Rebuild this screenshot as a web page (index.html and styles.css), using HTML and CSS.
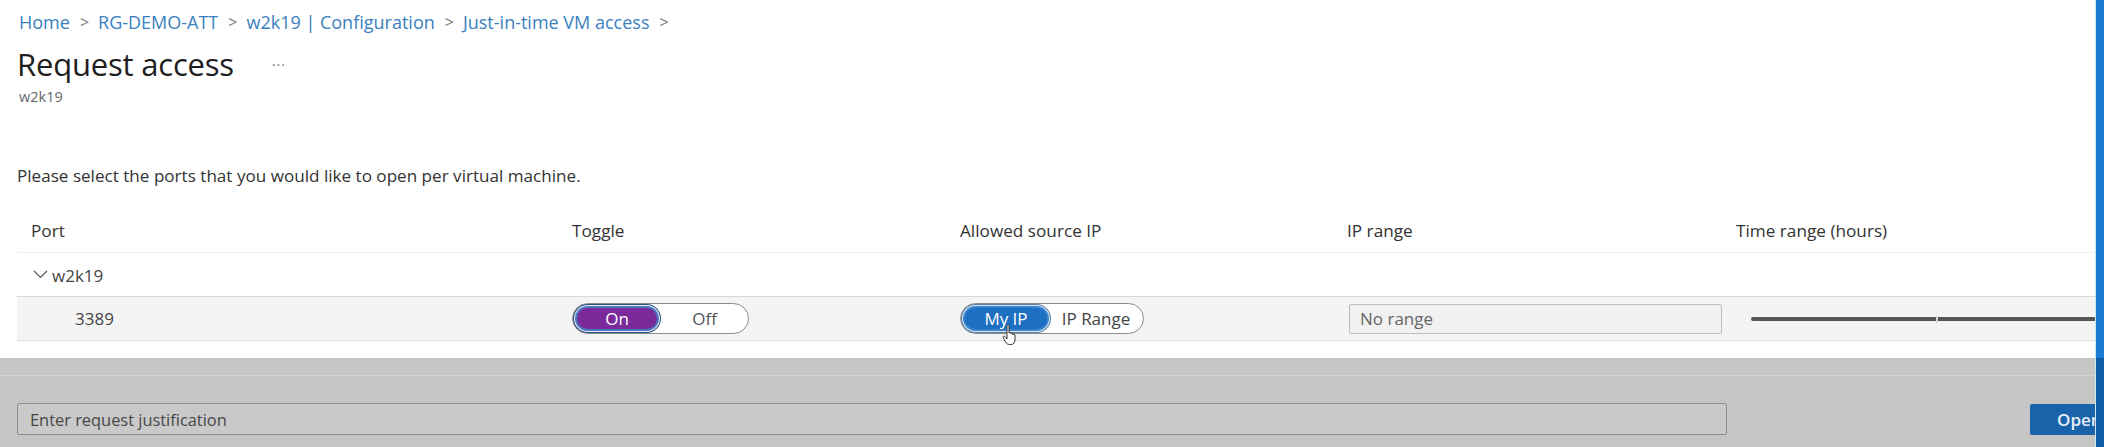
FILE: index.html
```html
<!DOCTYPE html>
<html lang="en">
<head>
<meta charset="utf-8">
<title>Request access</title>
<link rel="stylesheet" href="styles.css">
</head>
<body>
<div class="screen">
  <div class="main">
    <div class="top">
      <nav class="crumbs">
        <a>Home</a><span class="sep">&gt;</span>
        <a>RG-DEMO-ATT</a><span class="sep">&gt;</span>
        <a>w2k19 | Configuration</a><span class="sep">&gt;</span>
        <a>Just-in-time VM access</a><span class="sep">&gt;</span>
      </nav>
      <div class="title-row">
        <h1 class="title">Request access</h1>
        <span class="more">···</span>
      </div>
      <div class="subtitle">w2k19</div>
      <p class="intro">Please select the ports that you would like to open per virtual machine.</p>

      <div class="grid head">
        <div class="cell">Port</div>
        <div class="cell">Toggle</div>
        <div class="cell">Allowed source IP</div>
        <div class="cell">IP range</div>
        <div class="cell">Time range (hours)</div>
      </div>
      <div class="group">
        <svg class="chev" width="15" height="9" viewBox="0 0 15 9"><path d="M1 1 L7.5 7.5 L14 1" fill="none" stroke="#555" stroke-width="1.2"/></svg>
        <span>w2k19</span>
      </div>
      <div class="grid datarow">
        <div class="cell port">3389</div>
        <div class="cell">
          <div class="seg seg-toggle">
            <span class="opt on purple">On</span>
            <span class="opt off">Off</span>
          </div>
        </div>
        <div class="cell">
          <div class="seg seg-ip">
            <span class="opt on blue">My IP</span>
            <span class="opt off">IP Range</span>
            <svg class="cursor" width="18" height="22" viewBox="0 0 18 22"><path d="M5 1.5 C5 0.6 7 0.6 7 1.5 L7 9 C7 8 9 8 9 9 L9 10 C9 9 11 9 11 10 L11 11 C11 10 13 10 13 11 L13 16 C13 18.5 11.5 20.5 9 20.5 L7.5 20.5 C5.5 20.5 4.5 19.5 3.5 18 L1.2 13.5 C0.6 12.4 2 11.5 2.8 12.5 L5 15 Z" fill="#fff" stroke="#333" stroke-width="1"/></svg>
          </div>
        </div>
        <div class="cell">
          <div class="range-input">No range</div>
        </div>
        <div class="cell slider-cell">
          <div class="track"><span class="tick"></span></div>
        </div>
      </div>
    </div>
    <div class="footer">
      <div class="footer-line"></div>
      <div class="footer-row">
        <div class="just-input">Enter request justification</div>
        <button class="open-btn">Open ports</button>
      </div>
    </div>
  </div>
  <div class="edge"></div>
</div>
</body>
</html>
```

FILE: styles.css
```css
* { box-sizing: border-box; }
html, body { margin: 0; padding: 0; }
body {
  font-family: "Open Sans", "Noto Sans", "Liberation Sans", sans-serif;
  color: #323130;
  background: #fff;
  width: 2104px;
  height: 447px;
  overflow: hidden;
}
.screen { display: flex; height: 447px; }
.main {
  flex: 1 1 auto;
  display: flex;
  flex-direction: column;
  overflow: hidden;
  min-width: 0;
}
.top { height: 358px; background: #fff; }
.edge {
  flex: 0 0 9px;
  background: linear-gradient(#1a7bd2 0, #1a7bd2 358px, #0f5ca6 358px);
  border-left: 1px solid #cfe6f2;
}

.crumbs {
  padding: 9px 0 0 19px;
  height: 34px;
  line-height: 26px;
  font-size: 18px;
  display: flex;
  align-items: center;
}
.crumbs a { color: #3a7fc0; }
.crumbs .sep { color: #777; margin: 0 9px 0 10px; font-size: 16px; }

.title-row { display: flex; align-items: center; height: 40px; margin-top: 10px; padding-left: 17px; }
.title { margin: 0; font-size: 31px; font-weight: 400; color: #1e1e1e; line-height: 40px; letter-spacing: -0.2px; }
.more { margin-left: 38px; color: #777; font-size: 14px; letter-spacing: 1px; }
.subtitle { padding-left: 19px; margin-top: 3px; font-size: 14.5px; line-height: 20px; color: #666; }

.intro { margin: 58px 0 0 17px; font-size: 17.1px; line-height: 22px; color: #333; }

.grid {
  display: grid;
  grid-template-columns: 541px 388px 387px 389px 1fr;
  margin-left: 17px;
}
.cell { padding-left: 14px; display: flex; align-items: center; }
.head {
  margin-top: 21px;
  height: 45px;
  font-size: 17.2px;
  color: #333;
  border-bottom: 1px solid #f1f1f1;
}
.group {
  margin-left: 17px;
  height: 43px;
  display: flex;
  align-items: center;
  padding-left: 16px;
  font-size: 17px;
  color: #444;
  padding-top: 2px;
}
.chev { margin-right: 4px; margin-top: -2px; }
.datarow {
  height: 45px;
  background: #f4f4f4;
  border-top: 1px solid #d8d8d8;
  border-bottom: 1px solid #dedede;
  font-size: 17px;
}
.port { padding-left: 58px; color: #444; }

.seg {
  position: relative;
  display: flex;
  align-items: center;
  height: 31px;
  border: 1px solid #8c8c8c;
  border-radius: 16px;
  background: #fff;
  padding: 2px;
}
.seg-toggle { width: 177px; }
.seg-ip { width: 184px; }
.opt { height: 25px; display: flex; align-items: center; justify-content: center; border-radius: 13px; font-size: 17px; }
.on {
  color: #fff;
  border: 2px solid #4a78c0;
  box-shadow: 0 0 0 1px #e8eef8, 0 0 0 2px #2c4f82;
}
.purple { width: 84px; background: #7b2a9c; }
.blue { width: 86px; background: #1c6fc1; border-color: #3a84cf; box-shadow: 0 0 0 1px #dbe8f5, 0 0 0 2px #5c7fa6; }
.seg-toggle .off { flex: 1; color: #555; padding-left: 4px; }
.seg-ip .off { flex: 1; color: #444; padding-left: 2px; }
.cursor { position: absolute; left: 41px; top: 20px; }

.range-input {
  width: 373px;
  height: 30px;
  margin-left: 2px;
  background: #f1f1f1;
  border: 1px solid #bdbdbd;
  border-radius: 2px;
  display: flex;
  align-items: center;
  padding-left: 10px;
  color: #666;
  font-size: 17px;
}
.slider-cell { padding-left: 29px; }
.track {
  position: relative;
  flex: 1;
  height: 4px;
  background: #555;
  border-radius: 2px 0 0 2px;
}
.tick { position: absolute; left: 185px; top: -1px; width: 2px; height: 7px; background: #d8d8d8; }

.footer {
  flex: 1 1 auto;
  background: #c6c6c6;
  display: flex;
  flex-direction: column;
}
.footer-line { height: 18px; border-bottom: 1px solid #d2d2d2; }
.footer-row { display: flex; align-items: center; margin-top: 27px; }
.just-input {
  flex: 0 0 1710px;
  margin-left: 17px;
  height: 32px;
  background: #c9c9c9;
  border: 1px solid #8d8d8d;
  border-radius: 2px;
  display: flex;
  align-items: center;
  padding-left: 12px;
  color: #474747;
  font-size: 16.4px;
}
.open-btn {
  flex: 0 0 auto;
  margin-left: 303px;
  height: 31px;
  padding: 0 27px;
  background: #1a63ab;
  border: none;
  border-radius: 2px;
  color: #e8eef6;
  font-family: inherit;
  font-size: 17px;
  font-weight: 600;
  white-space: nowrap;
}
```
